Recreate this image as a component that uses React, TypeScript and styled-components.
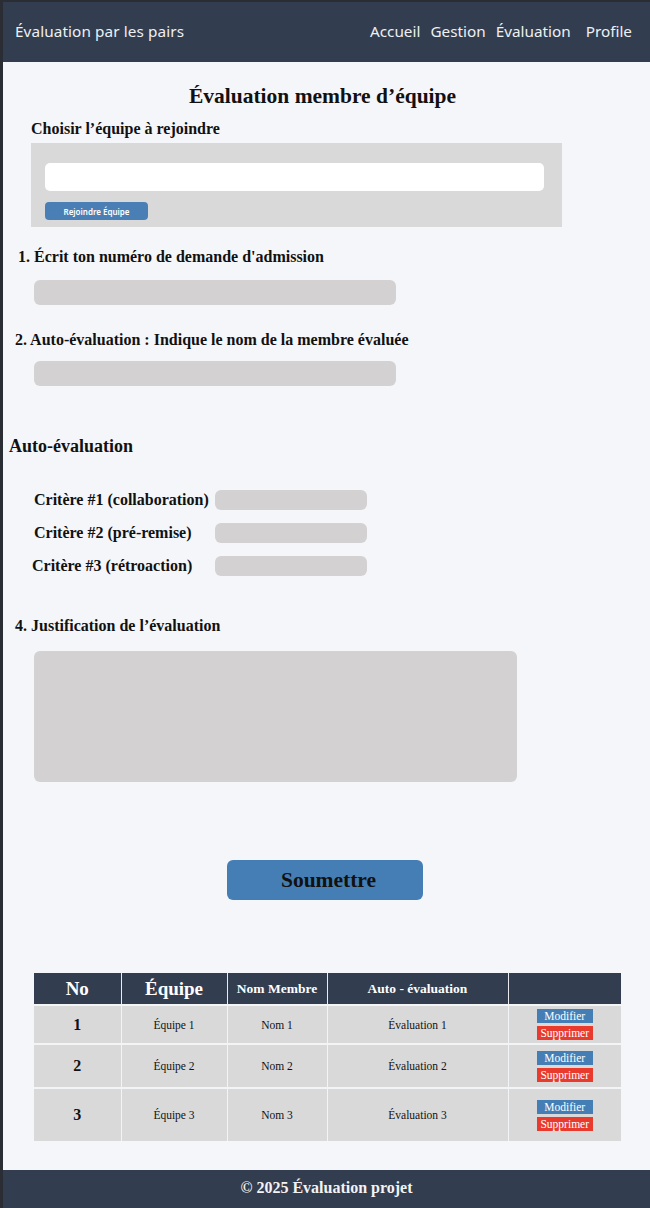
import { createGlobalStyle, styled } from "styled-components";

const GlobalStyle = createGlobalStyle`
  html, body {
    margin: 0;
    padding: 0;
  }
  body {
    background: #f5f6fa;
    font-family: "Liberation Serif", "Times New Roman", serif;
    color: #111;
  }
`;

const Page = styled.div`
  min-height: 1208px;
  display: flex;
  flex-direction: column;
  border-left: 3px solid #2a2d33;
  border-top: 2px solid #2a2d33;
  box-sizing: border-box;
`;

const Header = styled.header`
  height: 60px;
  background: #323d4f;
  display: flex;
  align-items: center;
  justify-content: space-between;
  padding: 0 18px 2px 12px;
  box-sizing: border-box;
  font-family: "Noto Sans", "Liberation Sans", sans-serif;
  color: #eef0f3;
  font-size: 15.3px;
`;

const Brand = styled.div`
  letter-spacing: 0.1px;
`;

const Nav = styled.nav`
  display: flex;
  gap: 10px;
`;

const NavLink = styled.a<{ $wide?: boolean }>`
  color: #eef0f3;
  text-decoration: none;
  margin-left: ${(p) => (p.$wide ? "5px" : "0")};
`;

const Main = styled.main`
  flex: 1;
  display: flex;
  flex-direction: column;
  padding-bottom: 20px;
`;

const Title = styled.h1`
  margin: 22px 0 0;
  text-align: center;
  font-size: 21.5px;
  font-weight: 700;
  padding-right: 8px;
`;

const Label = styled.h3<{ $indent: number }>`
  margin: 0;
  padding-left: ${(p) => p.$indent}px;
  font-size: 16px;
  font-weight: 700;
`;

const JoinBox = styled.div`
  margin: 5px 0 0 28px;
  width: 531px;
  height: 84px;
  background: #d9d9d9;
  display: flex;
  flex-direction: column;
  align-items: flex-start;
  padding: 20px 0 0 14px;
  box-sizing: border-box;
`;

const WhiteInput = styled.input`
  width: 499px;
  height: 28px;
  border: none;
  border-radius: 5px;
  background: #fff;
  box-sizing: border-box;
`;

const JoinButton = styled.button`
  margin-top: 11px;
  width: 103px;
  height: 18px;
  border: none;
  border-radius: 4px;
  background: #4a7fb5;
  color: #fff;
  font-family: "Noto Sans", "Liberation Sans", sans-serif;
  font-size: 8px;
  font-weight: 600;
  padding: 0;
`;

const Question = styled.section<{ $top: number }>`
  margin-top: ${(p) => p.$top}px;
  display: flex;
  flex-direction: column;
`;

const GrayInput = styled.input<{ $w: number; $h: number; $left?: number; $top?: number }>`
  width: ${(p) => p.$w}px;
  height: ${(p) => p.$h}px;
  margin: ${(p) => p.$top ?? 0}px 0 0 ${(p) => p.$left ?? 0}px;
  border: none;
  border-radius: 6px;
  background: #d3d1d2;
  box-sizing: border-box;
`;

const GrayArea = styled.textarea`
  width: 483px;
  height: 131px;
  margin: 16px 0 0 31px;
  border: none;
  border-radius: 6px;
  background: #d3d1d2;
  resize: none;
  box-sizing: border-box;
`;

const SectionTitle = styled.h2`
  margin: 50px 0 0 6px;
  font-size: 18px;
  font-weight: 700;
`;

const Criteria = styled.div`
  margin-top: 33px;
  display: grid;
  grid-template-columns: 212px 152px;
  row-gap: 13px;
  align-items: center;
`;

const CriteriaLabel = styled.span<{ $shift?: number }>`
  padding-left: ${(p) => 31 + (p.$shift ?? 0)}px;
  font-size: 16px;
  font-weight: 700;
  white-space: nowrap;
`;

const SubmitButton = styled.button`
  align-self: center;
  margin: 78px 0 0 0;
  position: relative;
  left: -2px;
  width: 196px;
  height: 40px;
  border: none;
  border-radius: 6px;
  background: #457eb5;
  color: #111;
  font-family: "Liberation Serif", "Times New Roman", serif;
  font-size: 21.5px;
  font-weight: 700;
  padding-left: 14px;
`;

const Table = styled.table`
  margin: 73px 0 0 31px;
  width: 587px;
  border-collapse: collapse;
  table-layout: fixed;
`;

const Th = styled.th<{ $big?: boolean }>`
  background: #323d4f;
  color: #fff;
  height: 31px;
  font-size: ${(p) => (p.$big ? "19px" : "13.5px")};
  font-weight: 700;
  border-left: 1.5px solid #e9ebef;
  padding: 0;
  &:first-child {
    border-left: none;
  }
`;

const Td = styled.td<{ $h: number; $num?: boolean }>`
  background: #d9d9d9;
  height: ${(p) => p.$h}px;
  text-align: center;
  font-size: ${(p) => (p.$num ? "16px" : "11.5px")};
  font-weight: ${(p) => (p.$num ? 700 : 400)};
  border-left: 1.5px solid #f3f4f6;
  border-top: 2px solid #f3f4f6;
  padding: 0;
  &:first-child {
    border-left: none;
  }
`;

const Actions = styled.div`
  display: flex;
  flex-direction: column;
  align-items: center;
  gap: 3px;
`;

const SmallBtn = styled.span<{ $red?: boolean }>`
  display: block;
  width: 56px;
  height: 14px;
  line-height: 14px;
  font-size: 11.5px;
  color: #fff;
  text-align: center;
  background: ${(p) => (p.$red ? "#e83a2d" : "#457eb5")};
`;

const Footer = styled.footer`
  height: 38px;
  background: #323d4f;
  color: #f3f3f3;
  display: flex;
  align-items: center;
  justify-content: center;
  font-size: 16px;
  font-weight: 700;
  padding-bottom: 2px;
  box-sizing: border-box;
`;

const rows = [
  { n: 1, h: 37 },
  { n: 2, h: 42 },
  { n: 3, h: 52 },
];

export default function App() {
  return (
    <Page>
      <GlobalStyle />
      <Header>
        <Brand>Évaluation par les pairs</Brand>
        <Nav>
          <NavLink href="#">Accueil</NavLink>
          <NavLink href="#">Gestion</NavLink>
          <NavLink href="#">Évaluation</NavLink>
          <NavLink href="#" $wide>Profile</NavLink>
        </Nav>
      </Header>
      <Main>
        <Title>Évaluation membre d’équipe</Title>
        <Question $top={11}>
          <Label $indent={28}>Choisir l’équipe à rejoindre</Label>
          <JoinBox>
            <WhiteInput />
            <JoinButton>Rejoindre Équipe</JoinButton>
          </JoinBox>
        </Question>
        <Question $top={21}>
          <Label $indent={15}>1. Écrit ton numéro de demande d'admission</Label>
          <GrayInput $w={362} $h={25} $left={31} $top={14} />
        </Question>
        <Question $top={26}>
          <Label $indent={12}>2. Auto-évaluation : Indique le nom de la membre évaluée</Label>
          <GrayInput $w={362} $h={25} $left={31} $top={12} />
        </Question>
        <SectionTitle>Auto-évaluation</SectionTitle>
        <Criteria>
          <CriteriaLabel>Critère #1 (collaboration)</CriteriaLabel>
          <GrayInput $w={152} $h={20} />
          <CriteriaLabel>Critère #2 (pré-remise)</CriteriaLabel>
          <GrayInput $w={152} $h={20} />
          <CriteriaLabel $shift={-2}>Critère #3 (rétroaction)</CriteriaLabel>
          <GrayInput $w={152} $h={20} />
        </Criteria>
        <Question $top={41}>
          <Label $indent={12}>4. Justification de l’évaluation</Label>
          <GrayArea />
        </Question>
        <SubmitButton>Soumettre</SubmitButton>
        <Table>
          <colgroup>
            <col style={{ width: 87 }} />
            <col style={{ width: 106 }} />
            <col style={{ width: 100 }} />
            <col style={{ width: 181 }} />
            <col style={{ width: 113 }} />
          </colgroup>
          <thead>
            <tr>
              <Th $big>No</Th>
              <Th $big>Équipe</Th>
              <Th>Nom Membre</Th>
              <Th>Auto - évaluation</Th>
              <Th />
            </tr>
          </thead>
          <tbody>
            {rows.map((r) => (
              <tr key={r.n}>
                <Td $h={r.h} $num>{r.n}</Td>
                <Td $h={r.h}>Équipe {r.n}</Td>
                <Td $h={r.h}>Nom {r.n}</Td>
                <Td $h={r.h}>Évaluation {r.n}</Td>
                <Td $h={r.h}>
                  <Actions>
                    <SmallBtn>Modifier</SmallBtn>
                    <SmallBtn $red>Supprimer</SmallBtn>
                  </Actions>
                </Td>
              </tr>
            ))}
          </tbody>
        </Table>
      </Main>
      <Footer>© 2025 Évaluation projet</Footer>
    </Page>
  );
}
